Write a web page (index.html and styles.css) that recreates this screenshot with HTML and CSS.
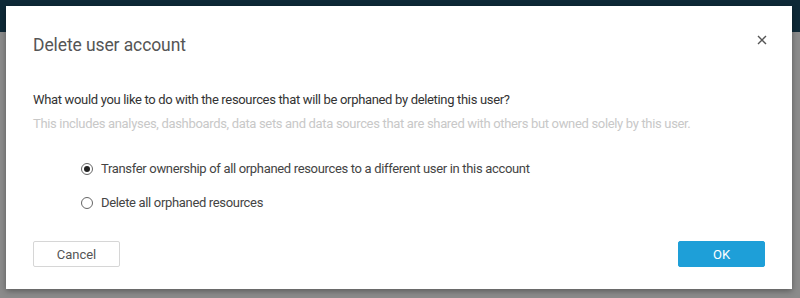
FILE: index.html
```html
<!DOCTYPE html>
<html lang="en">
<head>
<meta charset="utf-8">
<title>Delete user account</title>
<link rel="stylesheet" href="styles.css">
</head>
<body>
<div class="topbar"></div>
<div class="backdrop"></div>

<div class="modal">
  <div class="modal-header">
    <h2 class="modal-title">Delete user account</h2>
    <span class="close-btn">
      <svg width="10" height="10" viewBox="0 0 10 10">
        <path d="M1 1 L9 9 M9 1 L1 9" stroke="#555" stroke-width="1.4" fill="none"/>
      </svg>
    </span>
  </div>
  <div class="modal-body">
    <p class="question">What would you like to do with the resources that will be orphaned by deleting this user?</p>
    <p class="hint">This includes analyses, dashboards, data sets and data sources that are shared with others but owned solely by this user.</p>
    <div class="options">
      <label class="option"><span class="radio checked"></span>Transfer ownership of all orphaned resources to a different user in this account</label>
      <label class="option"><span class="radio"></span>Delete all orphaned resources</label>
    </div>
  </div>
  <div class="modal-footer">
    <button class="btn btn-cancel">Cancel</button>
    <button class="btn btn-ok">OK</button>
  </div>
</div>
</body>
</html>
```
FILE: styles.css
```css
html, body { margin: 0; padding: 0; }

body {
  width: 800px;
  height: 298px;
  overflow: hidden;
  background: #8d8d8d;
  font-family: Roboto, "Open Sans", sans-serif;
  position: relative;
}

.topbar { height: 32px; background: #0e2937; }

.backdrop { height: 266px; background: #8b8b8b; }

.modal {
  position: absolute;
  left: 6px;
  top: 6px;
  width: 786px;
  height: 283px;
  background: #fff;
  box-shadow: 0 2px 6px rgba(0, 0, 0, 0.35);
  display: flex;
  flex-direction: column;
  box-sizing: border-box;
  padding: 0 27px;
}

.modal-header {
  display: flex;
  justify-content: space-between;
  align-items: center;
  height: 74px;
  padding-top: 4px;
  box-sizing: border-box;
}

.modal-title {
  margin: 0;
  font-size: 17.5px;
  font-weight: normal;
  letter-spacing: -0.1px;
  color: #555;
}

.close-btn { display: flex; margin-right: -2px; margin-top: -10px; }

.modal-body { flex: 1; }

.question {
  margin: 12px 0 0;
  font-size: 13px;
  letter-spacing: -0.33px;
  color: #333;
}

.hint {
  margin: 9px 0 0;
  font-size: 13px;
  letter-spacing: -0.33px;
  color: #c8c8c8;
}

.options {
  margin: 30px 0 0 48px;
  display: flex;
  flex-direction: column;
  gap: 19px;
}

.option {
  display: flex;
  align-items: center;
  font-size: 13px;
  letter-spacing: -0.33px;
  color: #444;
}

.radio {
  width: 12px;
  height: 12px;
  border: 1px solid #666;
  border-radius: 50%;
  margin-right: 8px;
  box-sizing: border-box;
  position: relative;
}

.radio.checked::after {
  content: "";
  position: absolute;
  left: 2px;
  top: 2px;
  width: 6px;
  height: 6px;
  border-radius: 50%;
  background: #222;
}

.modal-footer {
  display: flex;
  justify-content: space-between;
  padding-bottom: 22px;
}

.btn {
  width: 87px;
  height: 26px;
  font-family: inherit;
  font-size: 13px;
  border-radius: 2px;
  cursor: pointer;
}

.btn-cancel {
  background: #fff;
  border: 1px solid #d6d6d6;
  color: #555;
}

.btn-ok {
  background: #1e9fd8;
  border: 1px solid #1e9fd8;
  color: #fff;
}
```
